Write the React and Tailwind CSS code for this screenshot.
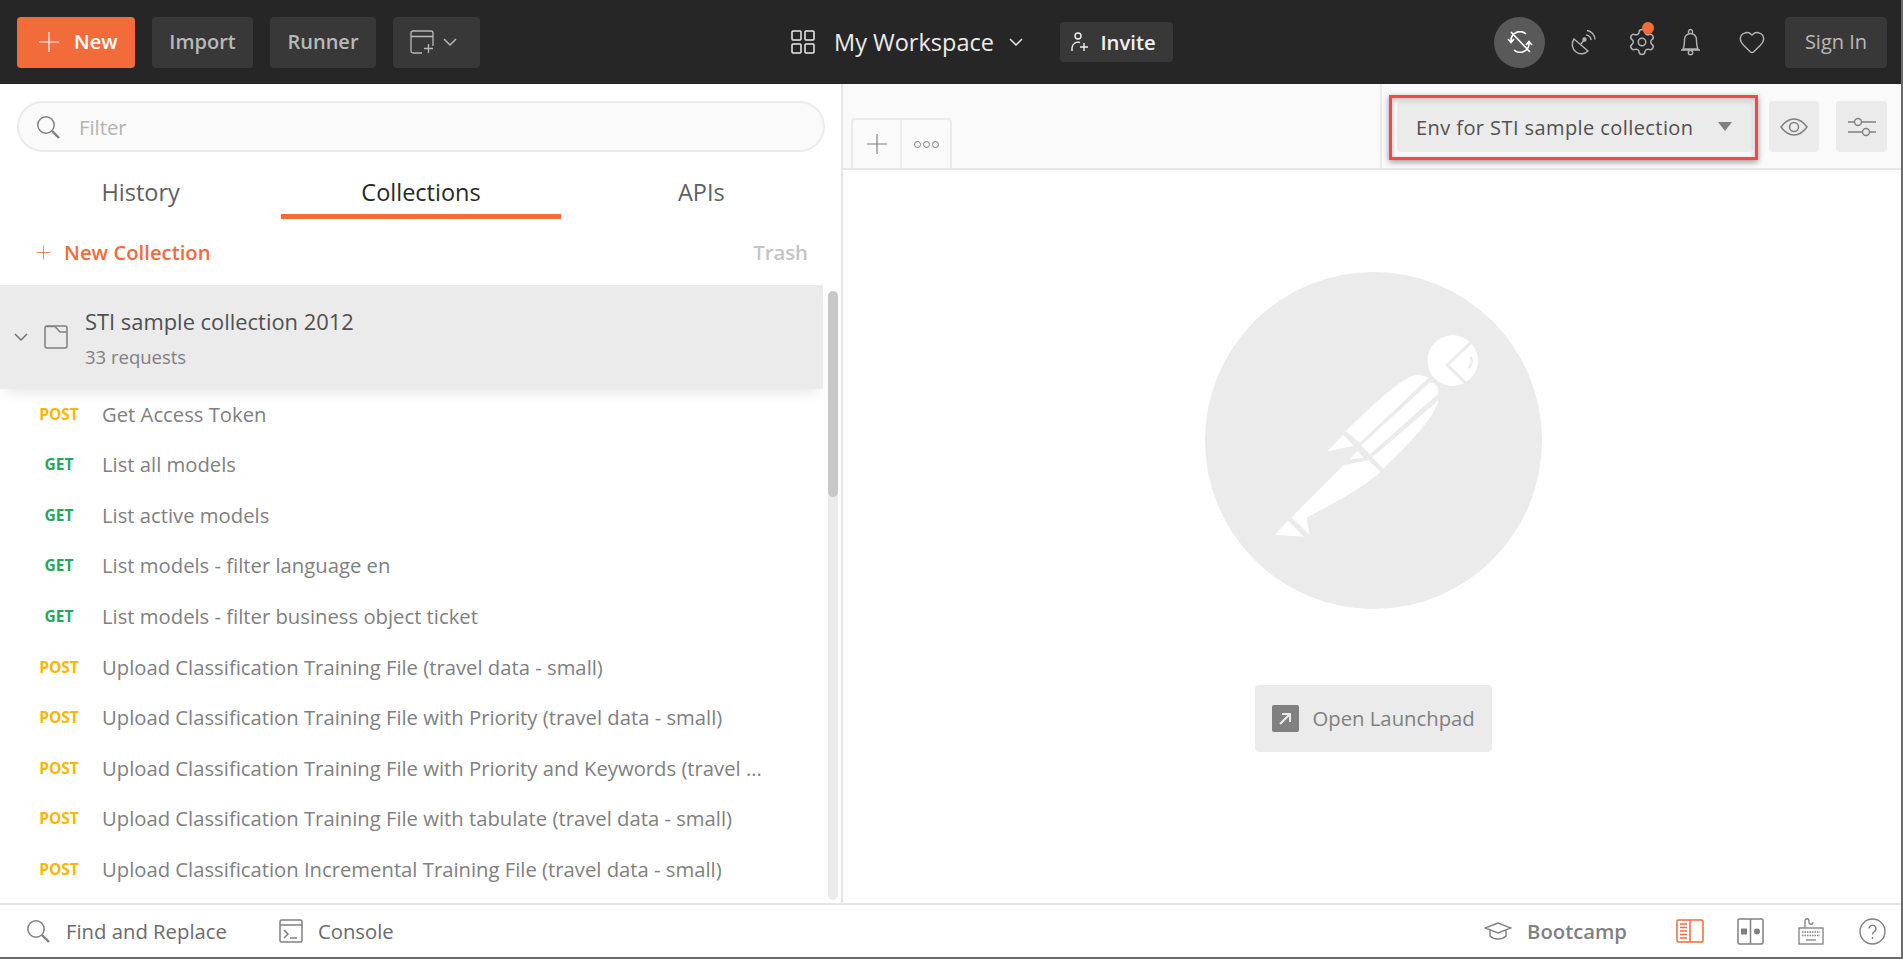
import { Heart, Settings } from 'lucide-react'

const requests = [
  { method: 'POST', name: 'Get Access Token' },
  { method: 'GET', name: 'List all models' },
  { method: 'GET', name: 'List active models' },
  { method: 'GET', name: 'List models - filter language en' },
  { method: 'GET', name: 'List models - filter business object ticket' },
  { method: 'POST', name: 'Upload Classification Training File (travel data - small)' },
  { method: 'POST', name: 'Upload Classification Training File with Priority (travel data - small)' },
  { method: 'POST', name: 'Upload Classification Training File with Priority and Keywords (travel ...' },
  { method: 'POST', name: 'Upload Classification Training File with tabulate (travel data - small)' },
  { method: 'POST', name: 'Upload Classification Incremental Training File (travel data - small)' },
]

const PlusIcon = ({ size = 24, className = '' }) => (
  <svg width={size} height={size} viewBox="0 0 24 24" className={className} fill="none" stroke="currentColor" strokeWidth="1.3">
    <path d="M12 1v22M1 12h22" />
  </svg>
)

const Chevron = ({ className = '' }) => (
  <svg width="16" height="10" viewBox="0 0 16 10" className={className} fill="none" stroke="currentColor" strokeWidth="1.5">
    <path d="M2 2l6 6 6-6" />
  </svg>
)

const SearchIcon = ({ className = '' }) => (
  <svg width="24" height="24" viewBox="0 0 24 24" className={className} fill="none" stroke="currentColor" strokeWidth="1.5">
    <circle cx="10" cy="10" r="8.2" />
    <path d="M16 16l7 7" strokeWidth="2.4" />
  </svg>
)

const PostmanLogo = () => (
  <svg width="337" height="337" viewBox="75 35 1012 1012">
    <circle cx="581" cy="541" r="506" fill="#ebebeb" />
    <circle cx="819" cy="301" r="76" fill="#fff" />
    <path d="M884 236L803 314 860 372" fill="none" stroke="#ebebeb" strokeWidth="9" />
    <path d="M873 290Q882 305 866 324" fill="none" stroke="#ebebeb" strokeWidth="7" />
    <g fill="#fff">
      <path d="M498 513C560 450 640 375 690 350 710 341 730 343 746 353L540 548Z" />
      <path d="M748 368C765 363 782 385 773 403L570 583 544 555Z" />
      <path d="M776 420C765 470 690 550 610 625L577 591Z" />
      <path d="M490 615L565 600 603 635C540 690 460 730 385 770 380 775 381 780 382 785L390 825 335 772Z" />
      <path d="M325 782L372 830 285 824Z" />
      <path d="M490 524L522 557 442 574Z" />
      <path d="M532 572L553 593 510 598Z" />
    </g>
  </svg>
)

const App = () => {
  return (
    <div className="w-[1903px] h-[959px] flex flex-col bg-white overflow-hidden font-['Open_Sans',sans-serif] border-r-2 border-b-2 border-[#6b6b6b]">
      <header className="h-[84px] shrink-0 bg-[#262626] flex items-center pl-[17px] pr-[14px]">
        <button className="w-[118px] h-[51px] rounded-[4px] bg-[#f26b3a] text-white flex items-center pl-[21px] gap-[14px] text-[20px] font-semibold">
          <PlusIcon size={22} />
          New
        </button>
        <button className="ml-[17px] w-[101px] h-[51px] rounded-[4px] bg-[#383838] text-[#b8b8b8] text-[20px] font-semibold">Import</button>
        <button className="ml-[17px] w-[106px] h-[51px] rounded-[4px] bg-[#383838] text-[#b8b8b8] text-[20px] font-semibold">Runner</button>
        <button className="ml-[17px] w-[87px] h-[51px] rounded-[4px] bg-[#383838] text-[#b8b8b8] flex items-center pl-[17px] gap-[8px]">
          <svg width="24" height="24" viewBox="0 0 24 24" fill="none" stroke="currentColor" strokeWidth="1.3">
            <path d="M12 23H3a2 2 0 0 1-2-2V3a2 2 0 0 1 2-2h18a2 2 0 0 1 2 2v13M1 6.500h22M14 18.500h9M18.500 14v9" />
          </svg>
          <Chevron />
        </button>

        <div className="ml-[311px] flex items-center text-[#ececec]">
          <svg width="24" height="24" viewBox="0 0 24 24" fill="none" stroke="currentColor" strokeWidth="1.5">
            <rect x="1" y="1" width="9" height="9" rx="1" />
            <rect x="14" y="1" width="9" height="9" rx="1" />
            <rect x="1" y="14" width="9" height="9" rx="1" />
            <rect x="14" y="14" width="9" height="9" rx="1" />
          </svg>
          <span className="ml-[19px] pt-[1px] text-[23.5px]">My Workspace</span>
          <Chevron className="ml-[14px]" />
        </div>
        <button className="ml-[36px] w-[113px] h-[40px] rounded-[4px] bg-[#383838] text-[#f0f0f0] flex items-center pl-[11px] gap-[12px] text-[20.3px] font-semibold">
          <svg width="18" height="20" viewBox="0 0 18 20" fill="none" stroke="currentColor" strokeWidth="1.4">
            <circle cx="7" cy="4" r="3" />
            <path d="M1 19v-3a6 6 0 0 1 8-5.500M9 15h8M13 11v8" />
          </svg>
          <span className="-ml-[0.5px]">Invite</span>
        </button>

        <div className="ml-auto flex items-center text-[#b3b3b3]">
          <div className="w-[51px] h-[51px] -ml-[1px] rounded-full bg-[#595959] text-white flex items-center justify-center">
            <svg width="28" height="22" viewBox="0 0 28 22" fill="none" stroke="currentColor" strokeWidth="1.6">
              <path d="M20 3A9 9 0 0 0 5 10M8 19A9 9 0 0 0 23 12M5 1l19 20M2 8l3 3.500L8 8M20 14l3-3.500 3 3.500" />
            </svg>
          </div>
          <svg width="26" height="26" viewBox="0 0 26 26" className="ml-[25px]" fill="none" stroke="currentColor" strokeWidth="1.4">
            <path d="M4 10C1 14 2 20 6 23s9 2 12-1z" />
            <path d="M11 15l3-4" />
            <circle cx="14.500" cy="10.500" r="1.500" fill="currentColor" />
            <path d="M16 6a5 5 0 0 1 5 5M17 1.500a9.500 9.500 0 0 1 8 9" />
          </svg>
          <div className="relative ml-[31px]">
            <Settings size={30} strokeWidth={1.2} />
            <span className="absolute -top-[5px] left-[15px] w-[12px] h-[12px] rounded-full bg-[#f26b3a]" />
          </div>
          <svg width="21" height="28" viewBox="0 0 21 28" className="ml-[23px]" fill="none" stroke="currentColor" strokeWidth="1.4">
            <path d="M3 21c1.500-3 1.500-6 1.500-9.500a6 6 0 0 1 12 0c0 3.500 0 6.500 1.500 9.500zM1 22h19M8.500 5c0-1-.2-3.500 2-3.500s2 2.500 2 3.500" />
            <circle cx="10.500" cy="24.500" r="2.200" />
          </svg>
          <Heart size={28} strokeWidth={1.2} className="ml-[37px]" />
          <button className="ml-[19px] w-[102px] h-[51px] rounded-[4px] bg-[#383838] text-[#b8b8b8] text-[20px]">Sign In</button>
        </div>
      </header>

      <div className="flex-1 flex min-h-0">
        <aside className="w-[843px] shrink-0 border-r-2 border-[#e6e6e6] flex flex-col">
          <div className="pl-[17px] pr-[16px] pt-[17px]">
            <div className="h-[51px] rounded-full border-2 border-[#ebebeb] bg-[#fafafa] flex items-center pl-[17px] text-[#808080]">
              <SearchIcon />
              <span className="ml-[19px] pt-[1px] text-[20.3px] text-[#b3b3b3]">Filter</span>
            </div>
          </div>
          <div className="h-[67px] flex pl-[1px]">
            <div className="w-[280px] flex items-center justify-center text-[23.5px] text-[#606060] pt-[14px]">History</div>
            <div className="w-[280px] flex items-center justify-center text-[23.5px] text-[#282828] border-b-[5px] border-[#f26b3a] mx-[1px] pt-[19px]">Collections</div>
            <div className="w-[280px] flex items-center justify-center text-[23.5px] text-[#606060] pt-[14px]">APIs</div>
          </div>
          <div className="h-[66px] flex items-center pl-[36px] pr-[33px] text-[20.3px]">
            <PlusIcon size={15} className="text-[#f26b3a]" />
            <span className="ml-[13px] font-semibold text-[#f26b3a]">New Collection</span>
            <span className="ml-auto font-semibold text-[#c4c4c4]">Trash</span>
          </div>
          <div className="flex-1 min-h-0 flex">
            <div className="flex-1 min-w-0 mr-[5px]">
              <div className="h-[104px] bg-[#ebebeb] flex items-center shadow-[0_8px_14px_-6px_rgba(0,0,0,0.12)]">
                <Chevron className="ml-[13px] text-[#707070]" />
                <svg width="24" height="24" viewBox="0 0 24 24" className="ml-[15px] text-[#808080]" fill="none" stroke="currentColor" strokeWidth="1.5">
                  <path d="M3 1h18a2 2 0 0 1 2 2v18a2 2 0 0 1-2 2H3a2 2 0 0 1-2-2V3a2 2 0 0 1 2-2zM1 1.500h10l5 5.500h7" />
                </svg>
                <div className="ml-[17px]">
                  <div className="text-[21.9px] text-[#505050] leading-[30px] pt-[2px]">STI sample collection 2012</div>
                  <div className="text-[18.500px] text-[#808080] leading-[25px] mt-[7px]">33 requests</div>
                </div>
              </div>
              <div>
                {requests.map((req) => (
                  <div key={req.name} className="h-[50.6px] flex items-center">
                    <span className={`w-[102px] pr-[23px] text-right text-[15.5px] font-bold ${req.method === 'POST' ? 'text-[#ffb400]' : 'text-[#26a65b]'}`}>
                      <span className="inline-block w-[40px] text-center">{req.method}</span>
                    </span>
                    <span className="pb-[1px] text-[20.25px] text-[#808080] whitespace-nowrap">{req.name}</span>
                  </div>
                ))}
              </div>
            </div>
            <div className="w-[10px] shrink-0 mr-[3px] mt-[6px] mb-[3px] rounded-full bg-[#ebebeb]">
              <div className="h-[206px] rounded-full bg-[#c8c8c8]" />
            </div>
          </div>
        </aside>

        <main className="flex-1 min-w-0 flex flex-col">
          <div className="h-[86px] shrink-0 bg-[#fafafa] border-b-2 border-[#e6e6e6] flex items-end">
            <div className="ml-[8px] flex h-[50px] w-[101px] border-2 border-b-0 border-[#ebebeb] rounded-t-[4px]">
              <div className="w-[49px] border-r-2 border-[#ebebeb] flex items-center justify-center text-[#808080]">
                <PlusIcon size={22} />
              </div>
              <div className="flex-1 flex items-center justify-center gap-[2px] text-[#808080]">
                <span className="w-[7px] h-[7px] rounded-full border-[1.5px] border-current" />
                <span className="w-[7px] h-[7px] rounded-full border-[1.5px] border-current" />
                <span className="w-[7px] h-[7px] rounded-full border-[1.5px] border-current" />
              </div>
            </div>
            <div className="ml-auto h-full w-[521px] border-l-2 border-[#ebebeb] flex items-start pt-[17px] pl-[15px]">
              <div className="w-[356px] h-[51px] rounded-[4px] bg-[#ebebeb] flex items-center pl-[19px] pr-[21px] text-[20px] font-medium text-[#505050] tracking-[0.42px] relative">
                <span className="pt-[2px]">Env for STI sample collection</span>
                <span className="ml-auto w-0 h-0 border-x-[7px] border-x-transparent border-t-[9px] border-t-[#808080]" />
                <div className="absolute -left-[8px] -top-[6px] w-[369px] h-[65px] border-[3px] border-[#f8474c] shadow-[0_2px_6px_rgba(0,0,0,0.4),inset_0_2px_5px_rgba(0,0,0,0.25)]" />
              </div>
              <div className="ml-[16px] w-[50px] h-[51px] rounded-[4px] bg-[#ebebeb] flex items-center justify-center text-[#808080]">
                <svg width="28" height="18" viewBox="0 0 28 18" fill="none" stroke="currentColor" strokeWidth="1.5">
                  <path d="M1 9C5 3.500 9 1 14 1s9 2.500 13 8c-4 5.500-8 8-13 8S5 14.500 1 9z" />
                  <circle cx="14" cy="9" r="4.500" />
                </svg>
              </div>
              <div className="ml-[17px] w-[51px] h-[51px] rounded-[4px] bg-[#ebebeb] flex items-center justify-center text-[#808080]">
                <svg width="28" height="20" viewBox="0 0 28 20" fill="none" stroke="currentColor" strokeWidth="1.4">
                  <path d="M0 5h6M14 5h14M0 15h14M22 15h6" />
                  <circle cx="10" cy="5" r="3.500" />
                  <circle cx="18" cy="15" r="3.500" />
                </svg>
              </div>
            </div>
          </div>
          <div className="flex-1 flex flex-col items-center pt-[102px] pl-[2px]">
            <PostmanLogo />
            <button className="mt-[76px] w-[237px] h-[67px] rounded-[4px] bg-[#ebebeb] flex items-center pl-[17px] text-[20.3px] text-[#808080]">
              <span className="w-[27px] h-[27px] rounded-[2px] bg-[#808080] flex items-center justify-center text-[#ebebeb]">
                <svg width="14" height="14" viewBox="0 0 14 14" fill="none" stroke="currentColor" strokeWidth="2">
                  <path d="M4 2h8v8M12 2L2 12" />
                </svg>
              </span>
              <span className="ml-[14px]">Open Launchpad</span>
            </button>
          </div>
        </main>
      </div>

      <footer className="h-[54px] shrink-0 border-t-2 border-[#e6e6e6] flex items-center pl-[26px] pr-[15px] text-[20.3px] text-[#6b6b6b]">
        <SearchIcon className="text-[#808080]" />
        <span className="ml-[16px]">Find and Replace</span>
        <svg width="24" height="24" viewBox="0 0 24 24" className="ml-[52px] text-[#808080]" fill="none" stroke="currentColor" strokeWidth="1.5">
          <rect x="1" y="1" width="22" height="22" rx="1.500" />
          <path d="M1 6h22M5 11l4 4-4 4M11 19h7" />
        </svg>
        <span className="ml-[15px]">Console</span>

        <svg width="28" height="18" viewBox="0 0 28 18" className="ml-auto text-[#808080]" fill="none" stroke="currentColor" strokeWidth="1.4">
          <path d="M14 1L1 6l13 5 13-5zM6 8v6c4 4 12 4 16 0V8" />
        </svg>
        <span className="ml-[15px] font-semibold text-[#808080]">Bootcamp</span>
        <svg width="28" height="24" viewBox="0 0 28 24" className="ml-[49px] text-[#f26b3a]" fill="none" stroke="currentColor" strokeWidth="1.5">
          <rect x="1" y="1" width="26" height="22" rx="1.500" />
          <path d="M14 1v22M4 5h7M4 8.500h7M4 12h7M4 15.500h7M4 19h7" />
        </svg>
        <svg width="27" height="27" viewBox="0 0 27 27" className="ml-[33px] text-[#808080]" fill="none" stroke="currentColor" strokeWidth="1.5">
          <rect x="1" y="1" width="25" height="25" rx="1.500" />
          <path d="M13.500 1v25" />
          <rect x="4" y="10.500" width="6" height="6" fill="currentColor" stroke="none" />
          <circle cx="20" cy="13.500" r="3" fill="currentColor" stroke="none" />
        </svg>
        <svg width="26" height="27" viewBox="0 0 26 27" className="ml-[34px] text-[#808080]" fill="none" stroke="currentColor" strokeWidth="1.3">
          <rect x="1" y="10" width="24" height="16" />
          <path d="M7 10V3c0-3 4-3 4 0v1c0 3 4 3 4 0" />
          <path d="M4 14h18M4 17.500h18" strokeDasharray="1.500 1" strokeWidth="1.500" />
          <path d="M8 22h10" />
        </svg>
        <svg width="27" height="27" viewBox="0 0 27 27" className="ml-[35px] text-[#808080]" fill="none" stroke="currentColor" strokeWidth="1.4">
          <circle cx="13.500" cy="13.500" r="12.500" />
          <path d="M10 10.500a3.500 3.500 0 1 1 5.500 3c-1.300.8-2 1.500-2 3M13.500 19v2" />
        </svg>
      </footer>
    </div>
  )
}

export default App
